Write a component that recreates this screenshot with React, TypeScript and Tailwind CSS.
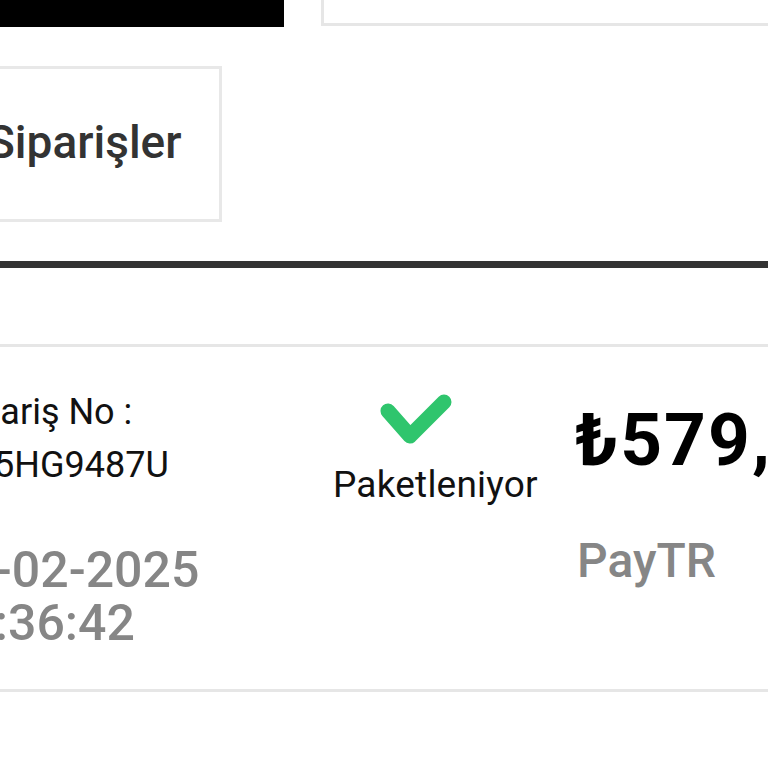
import React from "react";

const order = {
  label: "Sipariş No :",
  code: "SP5HG9487U",
  date: "12-02-2025",
  time: "14:36:42",
  status: "Paketleniyor",
  total: "₺579,90",
  method: "PayTR",
};

function CheckIcon() {
  return (
    <svg width="75" height="56" viewBox="0 0 75 56" className="block">
      <polyline
        points="10,19 32,44 66,10"
        fill="none"
        stroke="#2fc56d"
        strokeWidth="15"
        strokeLinecap="round"
        strokeLinejoin="round"
      />
    </svg>
  );
}

export default function App() {
  return (
    <div className="w-[768px] h-[768px] overflow-hidden bg-white font-['Roboto',sans-serif]">
      {/* Header strip */}
      <div className="flex items-start -ml-[60px] -mr-[60px]">
        <div className="w-[344px] h-[27px] bg-black shrink-0" />
        <div className="ml-[37px] flex-1 h-[26px] border-l-[3px] border-b-[3px] border-[#e6e6e6]" />
      </div>

      {/* Tab */}
      <div className="mt-[39px] -ml-[40px] w-[262px] h-[156px] border-[3px] border-[#e8e8e8] flex items-center pl-[24px] pb-[4px]">
        <span className="text-[46px] font-medium leading-none text-[#333] whitespace-nowrap">Siparişler</span>
      </div>

      <div className="mt-[39px] h-[7px] bg-[#333]" />

      {/* Order card */}
      <div className="mt-[76px] -ml-[80px] w-[928px] h-[348px] border-[3px] border-[#e6e6e6] flex">
        <div className="w-[411px] shrink-0 pl-[27px] pt-[39px] whitespace-nowrap">
          <p className="text-[36px] leading-[53px] text-[#111]">{order.label}</p>
          <p className="text-[36px] leading-[53px] text-[#111]">{order.code}</p>
          <div className="-ml-[12px] mt-[52px] text-[50px] font-medium leading-[53px] text-[#868686]">
            <p>{order.date}</p>
            <p>{order.time}</p>
          </div>
        </div>

        <div className="w-[243px] shrink-0 pt-[45px]">
          <div className="ml-[44px]">
            <CheckIcon />
          </div>
          <p className="-ml-[1px] mt-[10px] text-[37px] tracking-[0.2px] leading-[54px] text-[#111] whitespace-nowrap">{order.status}</p>
        </div>

        <div className="flex-1 pt-[57px] whitespace-nowrap">
          <p className="-ml-[2px] text-[73px] font-bold tracking-[2px] leading-none text-black">{order.total}</p>
          <p className="mt-[60px] text-[48px] font-medium leading-none text-[#868686]">{order.method}</p>
        </div>
      </div>
    </div>
  );
}
